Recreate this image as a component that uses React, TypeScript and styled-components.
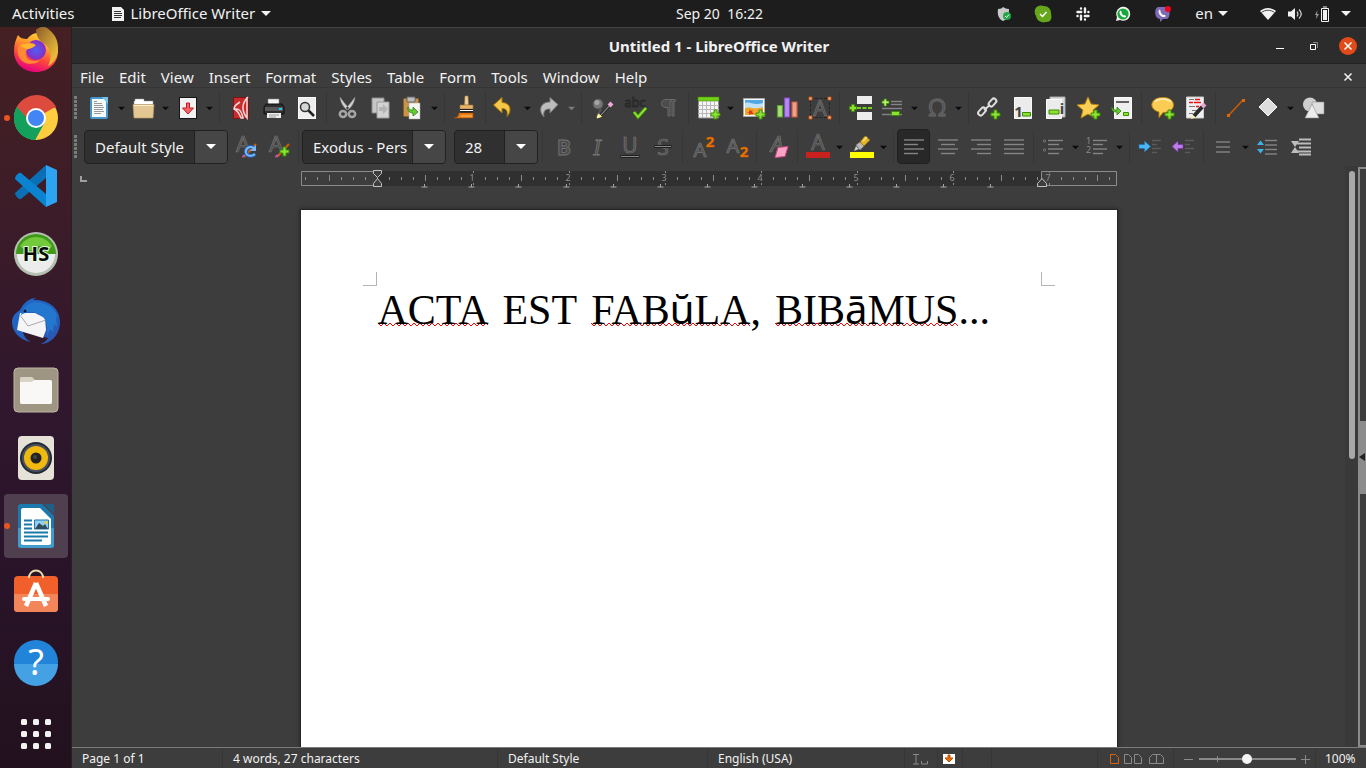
import React from "react";
import styled, { createGlobalStyle } from "styled-components";

const ui = `"Noto Sans", "Open Sans", sans-serif`;

const GlobalStyle = createGlobalStyle`
  * { box-sizing: border-box; }
  html, body, #root { height: 100%; margin: 0; }
  body { font-family: ${ui}; font-size: 15px; color: #f2f2f2; background: #3d3d3d; overflow: hidden; }
  button, input { font: inherit; color: inherit; border: 0; padding: 0; margin: 0; background: none; outline: none; }
  svg { display: block; flex: none; overflow: visible; }
`;

/* ---------- desktop ---------- */

const Desktop = styled.div`
  height: 100vh;
  display: flex;
  flex-direction: column;
`;

const TopBar = styled.header`
  height: 27px;
  flex: none;
  display: grid;
  grid-template-columns: 1fr auto 1fr;
  align-items: center;
  background: #1d1d1d;
`;

const TopGroup = styled.div<{ $end?: boolean }>`
  display: flex;
  align-items: center;
  justify-content: ${(p) => (p.$end ? "flex-end" : "flex-start")};
  padding: 0 15px 0 12px;
`;

const TopButton = styled.button<{ $gap?: number; $before?: number }>`
  display: flex;
  align-items: center;
  gap: ${(p) => p.$gap ?? 0}px;
  margin-left: ${(p) => p.$before ?? 0}px;
  line-height: 27px;
  white-space: pre;
`;

const Clock = styled.button`
  padding-left: 73px;
  font-size: 14px;
  line-height: 27px;
  white-space: pre;
`;

const Workspace = styled.div`
  flex: 1;
  min-height: 0;
  display: flex;
`;

const Dock = styled.nav`
  width: 72px;
  flex: none;
  display: flex;
  flex-direction: column;
  background: linear-gradient(#452023, #3c1c28 25%, #30172d 50%, #2a142b 70%, #22111d);
  border-right: 1px solid #262023;
`;

const DockList = styled.div`
  flex: 1;
  min-height: 0;
  display: flex;
  flex-direction: column;
  align-items: center;
  justify-content: flex-end;
  gap: 4px;
  overflow: hidden;
`;

const DockItem = styled.button<{ $active?: boolean }>`
  width: 64px;
  height: 64px;
  flex: none;
  display: grid;
  place-items: center;
  border-radius: 4px;
  background: ${(p) => (p.$active ? "#50404f" : "transparent")};
  position: relative;
`;

const RunningDot = styled.i`
  position: absolute;
  left: 0;
  top: 29px;
  width: 6px;
  height: 6px;
  border-radius: 50%;
  background: #e95420;
`;

const AppsButton = styled.button`
  height: 74px;
  flex: none;
  display: grid;
  place-items: center;
  padding-top: 6px;
`;

/* ---------- window ---------- */

const Window = styled.main`
  flex: 1;
  min-width: 0;
  display: flex;
  flex-direction: column;
  background: #3d3d3d;
`;

const TitleBar = styled.div`
  height: 37px;
  flex: none;
  display: grid;
  grid-template-columns: 1fr auto 1fr;
  align-items: center;
  background: #2c2c2c;
  border-top: 1px solid #434343;
  border-bottom: 1px solid #222;
`;

const Title = styled.h1`
  grid-column: 2;
  margin: 0;
  font-size: 15px;
  line-height: 20px;
  font-weight: 700;
`;

const WindowButtons = styled.div`
  display: flex;
  justify-content: flex-end;
  align-items: center;
  gap: 16px;
  padding-right: 9px;
`;

const WindowButton = styled.button`
  width: 18px;
  height: 18px;
`;

const MenuBar = styled.nav`
  height: 24px;
  flex: none;
  display: flex;
  align-items: center;
  justify-content: space-between;
  padding: 2px 9px 0 8px;
  border-bottom: 1px solid #353535;
`;

const Menus = styled.div`
  display: flex;
  gap: 15px;
`;

const MenuButton = styled.button`
  line-height: 22px;
`;

const ToolBar = styled.div`
  height: 39px;
  flex: none;
  display: flex;
  align-items: center;
  padding-left: 1px;
`;

const Grip = styled.i<{ $wide?: boolean }>`
  width: 3px;
  height: 23px;
  margin: 0 ${(p) => (p.$wide ? 7 : 6)}px 0 1px;
  background: repeating-linear-gradient(#7b7b7b 0 3px, transparent 3px 4px);
`;

const Tool = styled.button<{ $split?: boolean; $active?: boolean }>`
  width: 33px;
  height: 35px;
  flex: none;
  display: grid;
  place-items: center;
  padding-left: ${(p) => (p.$split || p.$active ? 0 : 3)}px;
  border-radius: 4px;
  border: 1px solid ${(p) => (p.$active ? "#202020" : "transparent")};
  background: ${(p) => (p.$active ? "#282828" : "transparent")};
`;

const ToolArrow = styled.button<{ $dim?: boolean }>`
  width: 11px;
  height: 35px;
  flex: none;
  display: grid;
  place-items: center;
  padding-top: 2px;
  color: ${(p) => (p.$dim ? "#7c7c7c" : "#0c0c0c")};
`;

const Separator = styled.i`
  width: 8px;
  height: 33px;
  flex: none;
  background: linear-gradient(90deg, transparent 4px, #363636 4px 5px, transparent 5px);
`;

const Combo = styled.div<{ $width: number; $after?: boolean }>`
  width: ${(p) => p.$width}px;
  height: 34px;
  flex: none;
  display: flex;
  border: 1px solid #202020;
  border-radius: 4px;
  background: #303030;
  overflow: hidden;
  margin-left: ${(p) => (p.$after ? 8 : 0)}px;
`;

const ComboInput = styled.input`
  flex: 1;
  min-width: 0;
  padding-left: 10px;
`;

const ComboArrow = styled.button`
  width: 33px;
  display: grid;
  place-items: center;
  background: #464646;
  border-left: 1px solid #202020;
`;

/* ---------- document ---------- */

const Body = styled.div`
  flex: 1;
  min-height: 0;
  display: flex;
`;

const Editor = styled.section`
  flex: 1;
  min-width: 0;
  display: flex;
  flex-direction: column;
  overflow: hidden;
`;

const RulerRow = styled.div`
  height: 23px;
  flex: none;
  display: grid;
  grid-template-columns: 1fr 818px 1fr;
  align-items: end;
`;

const TabCorner = styled.button`
  width: 7px;
  height: 6px;
  margin: 0 0 7px 8px;
  border-left: 2px solid #a0a0a0;
  border-bottom: 2px solid #a0a0a0;
`;

const Canvas = styled.div`
  flex: 1;
  min-height: 0;
  overflow: hidden;
  padding-top: 20px;
  display: flex;
  justify-content: center;
  align-items: flex-start;
`;

const Page = styled.article`
  width: 818px;
  height: 1056px;
  flex: none;
  background: #fff;
  color: #000;
  border: 1px solid #262626;
  box-shadow: 0 0 4px #222;
`;

const MarginMarks = styled.div`
  display: flex;
  justify-content: space-between;
  padding: 62px 62px 0;
`;

const Mark = styled.i<{ $right?: boolean }>`
  width: 14px;
  height: 14px;
  border-bottom: 1px solid #b4b4b4;
  border-left: ${(p) => (p.$right ? "1px solid #b4b4b4" : 0)};
  border-right: ${(p) => (p.$right ? 0 : "1px solid #b4b4b4")};
`;

const Line = styled.p`
  margin: 0;
  padding: 0 77px;
  display: flex;
  gap: 14px;
  font-family: "Liberation Serif", serif;
  font-size: 42px;
  line-height: 48px;
  white-space: nowrap;
`;

const Word = styled.span`
  display: flex;
`;

const Misspelt = styled.span`
  height: 48px;
  background: url("data:image/svg+xml,%3Csvg xmlns='http://www.w3.org/2000/svg' width='6' height='5'%3E%3Cpath d='M-1 0L0 1L3 4L6 1L7 0' fill='none' stroke='%23f00'/%3E%3C/svg%3E") 0 36px / 6px 5px repeat-x;
`;

const Fallback = styled.span`
  font-family: "Noto Sans", sans-serif;
  font-size: 40px;
  line-height: 40px;
`;

const ScrollTrack = styled.div`
  width: 13px;
  flex: none;
  display: flex;
  justify-content: center;
  background: #393939;
  padding-top: 5px;
`;

const ScrollThumb = styled.div`
  width: 6px;
  height: 50%;
  border-radius: 3px;
  background: #a8a8a8;
`;

const Sidebar = styled.aside`
  width: 8px;
  flex: none;
  display: flex;
  flex-direction: column;
  border: solid #8a8a8a;
  border-width: 2px 0 2px 2px;
  justify-content: center;
  margin-top: 1px;
`;

const SidebarHandle = styled.button`
  height: 73px;
  margin-left: -2px;
  background: #8c8c8c;
  display: grid;
  place-items: center;
`;

/* ---------- status bar ---------- */

const StatusBar = styled.footer`
  height: 21px;
  flex: none;
  display: flex;
  align-items: stretch;
  border-top: 1px solid #7a7a7a;
  font-size: 12px;
  line-height: 18px;
`;

const Cell = styled.div<{ $width?: number; $pad?: number; $last?: boolean }>`
  ${(p) => (p.$width ? `width: ${p.$width}px; flex: none;` : "flex: 1; min-width: 0;")}
  display: flex;
  align-items: center;
  padding: 2px 0 0 ${(p) => p.$pad ?? 10}px;
  white-space: nowrap;
  border-right: ${(p) => (p.$last ? 0 : "1px solid #363636")};
`;

const StatusIcon = styled.button`
  display: flex;
`;

const ZoomRange = styled.input`
  appearance: none;
  width: 97px;
  height: 14px;
  margin: 0 5px;
  background:
    linear-gradient(#8a8a8a, #8a8a8a) 18px 50% / 1px 6px no-repeat,
    linear-gradient(#8a8a8a, #8a8a8a) 0 50% / 100% 2px no-repeat;
  &::-webkit-slider-thumb {
    appearance: none;
    width: 10px;
    height: 10px;
    border-radius: 50%;
    background: #f4f4f4;
  }
`;

/* ---------- icons ---------- */

const Triangle = ({ w = 9, color = "currentColor" }: { w?: number; color?: string }) => (
  <svg width={w} height={5} viewBox="0 0 10 5"><path d="M0 0h10L5 5z" fill={color} /></svg>
);

const Plus = ({ x, y }: { x: number; y: number }) => (
  <path transform={`translate(${x} ${y})`} d="M3.5.5h3v3h3v3h-3v3h-3v-3h-3v-3h3z" fill="#8ae234" stroke="#3f8a04" />
);

const Letter = ({ x = 12, y = 21, size = 23, children, italic }: { x?: number; y?: number; size?: number; children: string; italic?: boolean }) => (
  <text x={x} y={y} fontFamily='"Noto Sans"' fontSize={size} textAnchor="middle" fontStyle={italic ? "italic" : "normal"} fill="#4a4a4a" stroke="#777" strokeWidth=".7">{children}</text>
);

const Rows = ({ rows, color = "#858585", w = 1.4 }: { rows: number[][]; color?: string; w?: number }) => (
  <g stroke={color} strokeWidth={w}>{rows.map(([x1, x2, y], i) => <path key={i} d={`M${x1} ${y}H${x2}`} />)}</g>
);

const icons: Record<string, React.ReactNode> = {
  newDoc: <><rect x="3" y="2" width="16" height="20" rx="1" fill="#f4f9fc" stroke="#4597cc" strokeWidth="2" /><path d="M14 1h6v7z" fill="#75c4ee" /><path d="M6 5.500h3M6 7.500h8M6 9.500h9M6 11.500h10M6 13.500h9M6 15.500h10M6 17.500h7" stroke="#9a9a9a" /></>,
  open: <><path d="M2 9V5h1V3h9v2h9v4z" fill="#fff" stroke="#999" strokeWidth=".5" /><path d="M1 8.500h21l-1 13.500H2z" fill="#e5c793" stroke="#b99b66" strokeWidth=".7" /><path d="M2 9.500h19" stroke="#fbebcd" /></>,
  save: <><rect x="3.500" y="1.500" width="17" height="21" fill="#f2f2f2" stroke="#161616" /><path d="M10.500 7h3v5h4L12 18l-5.500-6h4z" fill="#f06565" stroke="#c51a20" /></>,
  pdf: <><path d="M4.500 1.500h15v21h-15z" fill="#c92b2b" stroke="#7e1313" /><path d="M11 6C6 9 5 12 5 13c3 1 5 4 7 9h2C12 12 8 13 5 13M19 1c-6 6-7 13-1 21V1" fill="none" stroke="#f7d9d9" strokeWidth="1.500" /></>,
  print: <><path d="M6 3h11v7H6z" fill="#f5f5f5" stroke="#888" strokeWidth=".6" /><path d="M4 8h16l2 3v7H2v-7z" fill="#2d2d2d" stroke="#111" /><path d="M3 11h18v4H3z" fill="#585858" /><path d="M5 17h14v5H5z" fill="#eee" /><path d="M7 19h10M7 21h7" stroke="#999" /><path d="M17 12h3v2h-3z" fill="#19c8f5" /></>,
  preview: <><rect x="3.500" y="1.500" width="17" height="21" fill="#eee" stroke="#fafafa" /><circle cx="10" cy="11" r="4.500" fill="#d4d7d7" stroke="#333" strokeWidth="1.500" /><path d="m13.500 14.500 5.500 5.500" stroke="#222" strokeWidth="2.500" /></>,
  cut: <><path d="M4 1c0 5 4 11 7 13l2-2C10 9 7 5 4 1zM19 1c0 5-4 11-7 13l-2-2c3-3 6-7 9-11z" fill="#cfcfcf" stroke="#777" strokeWidth=".5" /><g fill="none" stroke="#a5a5a5" strokeWidth="2.500"><ellipse cx="7" cy="18" rx="3.200" ry="3" /><ellipse cx="16" cy="18" rx="3.200" ry="3" /></g></>,
  copy: <><path d="M3 2h12v15H3z" fill="#c6c6c6" stroke="#8c8c8c" /><path d="M8 6h12v16H8z" fill="#d2d2d2" stroke="#999" /><path d="M10 11h4V8l5 5-5 5v-3h-4z" fill="#b3b3b3" /></>,
  paste: <><rect x="2.500" y="2.500" width="15" height="18" rx="1" fill="#c99448" stroke="#8d5f22" /><path d="M6 1h8v5H6z" fill="#bcbcbc" stroke="#666" /><path d="M8 7h11v16H8z" fill="#f5f5f5" stroke="#aaa" strokeWidth=".5" /><path d="M7 11c1 3 3 3 5 3v-3l5 5-5 4v-3c-4 0-6-3-5-6z" fill="#62cc30" stroke="#327f10" strokeWidth=".8" /></>,
  clone: <><path d="M11 0h3l.5 9h-4z" fill="#f0d29b" stroke="#a77d3f" strokeWidth=".6" /><path d="M6 9h13v4H6z" fill="#e5b46c" stroke="#9c7033" strokeWidth=".6" /><path d="M6 13h13v4H6z" fill="#222" /><path d="M6 14.500h13" stroke="#fff" /><path d="M5 17h14v5H0c3 0 5-2 5-5z" fill="#e77d14" stroke="#b4560a" strokeWidth=".5" /><path d="M7 20h11" stroke="#ffc06b" /></>,
  undo: <path d="M-.5 9 8 1.500v5c9 0 10 9 5 14 1-6-1-8-5-8V17z" fill="#f5c647" stroke="#a87a07" />,
  redo: <path d="M20 8.500 12 1.500v4.500C2 6 0 15 6 21c-1-6 1-8 6-8v4z" fill="#bdbdbd" stroke="#777" />,
  find: <><circle cx="7" cy="8" r="5" fill="#777" stroke="#555" /><circle cx="6" cy="6.500" r="2.500" fill="#a5a5a5" /><path d="m10 13-4 8" stroke="#555" strokeWidth="2" /><path d="m9 20 11-12" stroke="#333" strokeWidth="3.500" /><path d="m9 20 11-12" stroke="#a5a5a5" strokeWidth="1" /><path d="m18 7 3 3" stroke="#f0a6d8" strokeWidth="4" /><path d="m6 22 1.500-4 3 2.500z" fill="#fff59a" stroke="#fff59a" /></>,
  spell: <><text x="11" y="11" fontFamily='"Noto Sans"' fontSize="13" textAnchor="middle" fill="#484848" stroke="#252525" strokeWidth=".8">abc</text><path d="m10 16 4 5 8-9" fill="none" stroke="#3f8a04" strokeWidth="3.500" /><path d="m10 16 4 5 8-9" fill="none" stroke="#8ae234" strokeWidth="2" /></>,
  pilcrow: <path d="M18 3.500H9c-6 0-6 8 0 8h2V20h2V5h2v15h2V5h2z" fill="#4c4c4c" stroke="#6b6b6b" />,
  table: <><path d="M1.500 1.500h20V22h-20z" fill="#f5f5f5" stroke="#8b8b8b" /><path d="M1 1h21v4H1z" fill="#73d216" stroke="#3f8a04" strokeWidth=".6" /><path d="M1 9.500h21M1 13.500h21M1 17.500h21M5.500 5v17M9.500 5v17M13.500 5v17M17.500 5v17" stroke="#b7b7b7" /><Plus x={13.500} y={13.500} /></>,
  image: <><path d="M1.500 2.500h21v18h-21z" fill="#f9f9f9" stroke="#aaa" /><path d="M3 4h18v8H3z" fill="#54a7e5" /><path d="M3 7c5-2 8 3 18 0v6H3z" fill="#bfe2f8" /><path d="M3 12c5-2 10 2 18-1v8H3z" fill="#f3a52b" /><path d="m8 13 1 2 2-1-1 2 2 2H9l-2 1v-2l-2-1h2z" fill="#d73d17" /><Plus x={13.500} y={13.500} /></>,
  chart: <g strokeWidth="1.200"><path d="M2.500 9.500h5V21h-5z" fill="#a5dd7c" stroke="#55a425" /><path d="M9.500 2h5v19h-5z" fill="#b58bea" stroke="#8348ce" /><path d="M17 6h5v15h-5z" fill="#eba08b" stroke="#c85f42" /></g>,
  textBox: <><path d="M2.500 2.500h19v19h-19z" fill="none" stroke="#242424" strokeDasharray="3 1.500" /><Letter y={20} size={21}>A</Letter><g fill="#f9bb8c" stroke="#c45214"><path d="M1 1h3v3H1zM20 1h3v3h-3zM1 20h3v3H1zM20 20h3v3h-3z" /></g></>,
  pageBreak: <><path d="M8 0h15v8H8zM8 16h15v8H8z" fill="#ededed" /><path d="M8 12h15" stroke="#73d216" strokeWidth="2" strokeDasharray="4 1.500" /><path d="M2.500 8.500h3v2h2v3h-2v2h-3v-2h-2v-3h2z" fill="#8ae234" stroke="#3f8a04" strokeWidth=".8" /></>,
  field: <><Rows rows={[[10, 21, 5.500], [10, 21, 8.500], [1, 21, 12.500], [1, 11, 18.500], [18, 21, 18.500]]} /><path d="M10.500 15.500h8v4h-8z" fill="#8ae234" stroke="#3f8a04" /><path d="M3 3h2.500v2H8v2.500H5.500V10H3V7.500H1V5h2z" fill="#b4f26d" stroke="#3f8a04" strokeWidth=".8" /></>,
  omega: <text x="12" y="20" fontFamily='"Noto Sans"' fontSize="24" textAnchor="middle" fill="#505050" stroke="#6c6c6c" strokeWidth=".8">Ω</text>,
  link: <><g fill="none" stroke="#dedede" strokeWidth="2"><rect x="12" y="2" width="5" height="9" rx="2.500" transform="rotate(42 14.500 6.500)" /><rect x="1.500" y="11" width="5" height="9" rx="2.500" transform="rotate(42 4 15.500)" /><path d="m6 14 6-5" /></g><Plus x={12.500} y={13.500} /></>,
  footnote: <><path d="M3.500 1.500h17v21h-17z" fill="#ececec" stroke="#fafafa" /><text x="7.500" y="21" fontFamily='"Noto Sans"' fontWeight="700" fontSize="15" textAnchor="middle" fill="#444">1</text><path d="M11.500 16.500h8v3.500h-8z" fill="#8ae234" stroke="#3f8a04" /></>,
  endnote: <><path d="M6 1h15v20H6z" fill="#dcdcdc" stroke="#aaa" /><path d="M2.500 3.500h15v19h-15z" fill="#ececec" stroke="#fafafa" /><path d="M5 14h10v4H5z" fill="#8ae234" stroke="#3f8a04" /><text x="18" y="18" fontFamily='"Noto Sans"' fontWeight="700" fontSize="15" textAnchor="middle" fill="#444">i</text></>,
  bookmark: <><path d="m11 1 3 7 8 1-6 5 2 8-7-4-7 4 2-8-6-5 8-1z" fill="#fbcf55" stroke="#bd8709" /><Plus x={13.500} y={13.500} /></>,
  crossRef: <><path d="M4.500 1.500h17v21h-17z" fill="#efefef" stroke="#fafafa" /><path d="M6 6h13" stroke="#333" strokeWidth="1.500" /><path d="M13.500 16.500h5v3h-5z" fill="#8ae234" stroke="#3f8a04" /><path d="M2 11c1 3 3 3 5 3v-3l4 4-4 4v-3c-4 0-6-2-5-5z" fill="#62cc30" stroke="#327f10" strokeWidth=".8" /></>,
  comment: <><path d="M12 1.500c14 0 14 15 0 15l-4 5v-5.500C-3 13-1 1.500 12 1.500z" fill="#fbcb54" stroke="#bd8709" /><path d="M4 6c3-4 12-4 16 0" stroke="#ffe9a8" fill="none" strokeWidth="2" /><Plus x={13.500} y={13.500} /></>,
  track: <><path d="M2.500 1h17v21h-17z" fill="#f0f0f0" stroke="#ccc" /><path d="M5 3.500h5M5 10.500h6M8 14.500h5M5 17.500h4" stroke="#777" /><path d="M11 3.500h5M5 6.500h4M10 6.500h7M12 10.500h3" stroke="#e11" strokeWidth="1.500" /><path d="m10 20 9-10" stroke="#2b2b2b" strokeWidth="4" /><path d="m18 8 3 3" stroke="#e8a5d4" strokeWidth="4" /><path d="m7 23 1.500-4 3 2.500z" fill="#fff1a0" /></>,
  line: <><path d="M4 19 18 4" stroke="#ce5c00" strokeWidth="1.500" /><path d="M2 18h3v3H2zM17 3h3v3h-3z" fill="#e06808" /></>,
  diamond: <path d="m11 2 9 9-9 9-9-9z" fill="#ddd" stroke="#f5f5f5" />,
  shapes: <><circle cx="8" cy="8.500" r="7" fill="#cfcfcf" /><path d="M10 6h12v12H10z" fill="#dfdfdf" stroke="#8b8b8b" strokeWidth=".6" /><path d="m10 8 7 14H3z" fill="#ececec" stroke="#8b8b8b" strokeWidth=".6" /></>,

  updateStyle: <><Letter x={9} y={17} size={22}>A</Letter><path d="m10 22 12-13" stroke="#ce5c00" strokeWidth="2" /><path d="M8 23c0-4 3-4 4-3z" fill="#c45ad0" /><path d="M20 13c-5-3-9 1-8 5 1 3 6 4 9 1" fill="none" stroke="#1e5fb0" strokeWidth="4" /><path d="M20 13c-5-3-9 1-8 5 1 3 6 4 9 1" fill="none" stroke="#7db8f5" strokeWidth="2" /><path d="M22 10v6h-6z" fill="#7db8f5" /></>,
  newStyle: <><Letter x={9} y={17} size={22}>A</Letter><path d="m10 22 12-13" stroke="#ce5c00" strokeWidth="2" /><path d="M8 23c0-4 3-4 4-3z" fill="#c45ad0" /><Plus x={12.500} y={11.500} /></>,
  bold: <text x="12" y="19.500" fontFamily='"Noto Sans"' fontWeight="700" fontSize="21" textAnchor="middle" fill="#4a4a4a" stroke="#777" strokeWidth=".8">B</text>,
  italic: <text x="12" y="19.500" fontFamily='"Liberation Serif"' fontStyle="italic" fontSize="23" textAnchor="middle" fill="#4a4a4a" stroke="#777" strokeWidth=".8">I</text>,
  underline: <><Letter y={18} size={21}>U</Letter><path d="M2.500 21.500h19" stroke="#1f1f1f" strokeWidth="3" /><path d="M3 21.500h18" stroke="#8a8a8a" /></>,
  strike: <><Letter y={19.500} size={21}>S</Letter><path d="M3.500 11.500h17" stroke="#1f1f1f" strokeWidth="3" /><path d="M4 11.500h16" stroke="#8a8a8a" /></>,
  superscript: <><Letter x={8} y={22} size={20}>A</Letter><text x="18" y="12" fontFamily='"Noto Sans"' fontWeight="700" fontSize="15" textAnchor="middle" fill="#f57900" stroke="#c45a00" strokeWidth=".6">2</text></>,
  subscript: <><Letter x={8} y={18} size={20}>A</Letter><text x="19" y="22" fontFamily='"Noto Sans"' fontWeight="700" fontSize="15" textAnchor="middle" fill="#f57900" stroke="#c45a00" strokeWidth=".6">2</text></>,
  clear: <><Letter x={11} y={17} size={22} italic>A</Letter><path d="m12 12.500 10-1-3 10-10 1z" fill="#f8a2c6" stroke="#cf4884" /></>,
  fontColor: <><Letter y={15} size={21}>A</Letter><path d="M0 17h24v6H0z" fill="#c9211e" /></>,
  highlight: <><path d="M0 17h24v6H0z" fill="#ff0" /><path d="m4 16 2-5 3 3z" fill="#ccc" /><path d="m6 10 4-3 4 4-4 4z" fill="#b9b9b9" stroke="#777" strokeWidth=".5" /><path d="m10 7 5-6 5 4-6 6z" fill="#e3b32a" stroke="#96700c" strokeWidth=".7" /><path d="m13 6 4-4" stroke="#ffe68a" strokeWidth="1.500" /></>,
  left: <Rows rows={[[2, 22, 5], [2, 16, 9.500], [2, 22, 14], [2, 16, 18.500]]} />,
  center: <Rows rows={[[2, 22, 5], [5, 19, 9.500], [2, 22, 14], [5, 19, 18.500]]} />,
  right: <Rows rows={[[2, 22, 5], [8, 22, 9.500], [2, 22, 14], [8, 22, 18.500]]} />,
  justify: <Rows rows={[[2, 22, 5], [2, 22, 9.500], [2, 22, 14], [2, 22, 18.500]]} />,
  bullets: <><Rows rows={[[6, 21, 5.500], [6, 17, 9.500], [6, 21, 14], [6, 17, 18.500]]} /><g fill="none" stroke="#777"><circle cx="2.500" cy="6" r="1.200" /><circle cx="2.500" cy="15" r="1.200" /></g></>,
  numbers: <><Rows rows={[[7, 21, 5.500], [7, 17, 9.500], [7, 21, 14], [7, 17, 18.500]]} /><text x="0" y="9" fontSize="9" fontFamily='"Noto Sans"' fill="#888">1</text><text x="0" y="18" fontSize="9" fontFamily='"Noto Sans"' fill="#888">2</text></>,
  indent: <><Rows color="#5b5b5b" rows={[[13, 22, 5.500], [13, 18, 9.500], [13, 22, 13.500], [13, 18, 17.500]]} /><path d="M0 9.500h5.500V6l6 5.500-6 5.500v-3.500H0z" fill="#4ab7f4" stroke="#1a6fae" strokeWidth=".6" /></>,
  outdent: <><Rows color="#5b5b5b" rows={[[13, 22, 5.500], [13, 18, 9.500], [13, 22, 13.500], [13, 18, 17.500]]} /><path d="M11 9.500H6V6L0 11.500 6 17v-3.500h5z" fill="#c07bea" stroke="#7433a5" strokeWidth=".6" /></>,
  lineSpacing: <Rows rows={[[4, 18, 7], [4, 18, 12], [4, 18, 17]]} />,
  moreSpace: <><Rows rows={[[8, 20, 5.500], [8, 20, 10], [8, 20, 14.500], [8, 20, 19]]} /><path d="M0 10h7L3.500 5.500zM0 14h7l-3.500 4.500z" fill="#3eb4e6" /></>,
  lessSpace: <><path d="M9 4.500h12M7 8.500h14M9 12.500h12M7 16.500h14M9 19.500h12" stroke="#bcbcbc" strokeWidth="2" /><path d="M1 6h8l-4 6zM1 18h8l-4-6z" fill="#bdbdbd" /></>,
};

const Icon = ({ name }: { name: string }) => (
  <svg width="24" height="24" viewBox="0 0 24 24">{icons[name]}</svg>
);

/* "name" is a plain tool, "name+" opens a menu, "name-" has a disabled menu, "name*" is switched on, "|" separates groups */
const standardTools = "newDoc+ open+ save+ | pdf print preview | cut copy paste+ | clone | undo+ redo- | find spell pilcrow | table+ image chart textBox | pageBreak field+ omega+ | link footnote endnote bookmark crossRef | comment track | line diamond+ shapes".split(" ");
const styleTools = "updateStyle newStyle |".split(" ");
const formatTools = "| bold italic underline strike | superscript subscript | clear | fontColor+ highlight+ | left* center right justify | bullets+ numbers+ | indent outdent | lineSpacing+ moreSpace lessSpace".split(" ");

const Tools = ({ items }: { items: string[] }) => (
  <>
    {items.map((item, i) => {
      if (item === "|") return <Separator key={i} />;
      const name = item.replace(/[+*-]$/, "");
      const split = /[+-]$/.test(item);
      return (
        <React.Fragment key={i}>
          <Tool $split={split} $active={item.endsWith("*")} aria-label={name}><Icon name={name} /></Tool>
          {split && <ToolArrow $dim={item.endsWith("-")} aria-label={`${name} options`}><Triangle w={7} /></ToolArrow>}
        </React.Fragment>
      );
    })}
  </>
);

const ComboBox = ({ label, value, width, after }: { label: string; value: string; width: number; after?: boolean }) => (
  <Combo $width={width} $after={after}>
    <ComboInput aria-label={label} defaultValue={value} />
    <ComboArrow aria-label={`${label} list`}><Triangle w={10} color="#fff" /></ComboArrow>
  </Combo>
);

/* ---------- ruler ---------- */

const Ruler = () => {
  const ticks: React.ReactNode[] = [];
  for (let k = -6; k <= 61; k++) {
    const x = 77.5 + k * 12;
    if (k === 0 || x > 812) continue;
    const mod = ((k % 8) + 8) % 8;
    if (mod === 0) ticks.push(<path key={k} d={`M${x} 2v2M${x} 14v2`} />);
    else if (mod === 4) ticks.push(<path key={k} d={`M${x} 6v6`} />);
    else ticks.push(<path key={k} d={`M${x} 8v3`} />);
  }
  return (
    <svg width="818" height="20" viewBox="0 0 818 20">
      <path d="M77 2h665v15H77z" fill="#303030" />
      <g fill="#3d3d3d" stroke="#8b8b8b">
        <path d="M1.500 2.500h76v14h-76zM741.500 2.500h75v14h-75z" />
      </g>
      <g stroke="#8b8b8b">{ticks}</g>
      <g fill="#8e8e8e" fontFamily='"Noto Sans"' fontSize="9" textAnchor="middle">
        {[1, 2, 3, 4, 5, 6, 7].map((n) => <text key={n} x={76 + n * 96} y="12">{n}</text>)}
      </g>
      <g stroke="#a5a5a5">
        {Array.from({ length: 13 }, (_, i) => <path key={i} d={`M${124.500 + Math.round(i * 47.2)} 15v3m-3 0h6`} />)}
      </g>
      <g fill="#3d3d3d" stroke="#c4c4c4">
        <path d="M73.500 1.500h8v3l-4 4-4-4z" /><path d="M73.500 17.500h8v-3l-4-5-4 5z" /><path d="M737.500 17.500h9v-3l-4.500-5-4.500 5z" />
      </g>
    </svg>
  );
};

/* ---------- launcher icons ---------- */

const dockIcons: { name: string; running?: boolean; active?: boolean; art: React.ReactNode }[] = [
  { name: "Firefox", art: <>
    <defs>
      <linearGradient id="fx" x1=".8" y1="0" x2=".4" y2="1"><stop offset="0" stopColor="#ffe03a" /><stop offset=".35" stopColor="#ffa22b" /><stop offset=".65" stopColor="#ff4c3c" /><stop offset="1" stopColor="#e6007e" /></linearGradient>
      <radialGradient id="fxBlue"><stop offset="0" stopColor="#4d60f0" /><stop offset="1" stopColor="#8b2bc5" /></radialGradient>
      <linearGradient id="fxTail" x1="0" x2="1" y2="1"><stop offset="0" stopColor="#8b5c2a" /><stop offset="1" stopColor="#ffd23e" /></linearGradient>
    </defs>
    <path d="M6 9c2 3 5 4 9 4 4-5 9-7 13-6 9 2 18 7 18 18 0 12-9 21-22 21S2 37 2 25c0-7 2-12 4-16z" fill="url(#fx)" />
    <path d="M24 4c3-3 7-4 11-2 7 5 11 11 11 20 0 8-4 15-10 18 4-8 3-16-2-21-6-4-10-8-10-15z" fill="url(#fxTail)" />
    <circle cx="24" cy="24" r="10" fill="url(#fxBlue)" />
    <path d="M7 19c4-4 10-3 16-1-3 5-7 4-9 7-2 8 6 12 14 9-5 6-17 5-21-3-2-4-2-8 0-12z" fill="#ff8a32" /><path d="M8 20c4-3 10-3 16-1-3 3-7 4-9 4z" fill="#ffb62d" />
  </> },
  { name: "Chrome", running: true, art: <>
    <circle cx="24" cy="24" r="22" fill="#ffcd40" />
    <path d="M24 24 4.900 13A22 22 0 0 1 43.100 13z" fill="#dd4b3e" /><path d="M24 14h20.500A22 22 0 0 0 4.900 13l10 16z" fill="#dd4b3e" />
    <path d="M4.900 13A22 22 0 0 0 23 46l9.500-17L24 34z" fill="#12a05c" /><path d="M15 29 4.900 13A22 22 0 0 0 23 46l9-17z" fill="#12a05c" />
    <circle cx="24" cy="24" r="10" fill="#fff" /><circle cx="24" cy="24" r="8" fill="#4285f4" />
  </> },
  { name: "Visual Studio Code", art: <>
    <path d="M3 31 34 3v13L9 37c-2 1-6-3-6-6z" fill="#0b6fb5" /><path d="M3 17c0-3 4-7 6-6l25 21v13z" fill="#0a84d0" /><path d="m34 3 11 5v32l-11 5z" fill="#2ca4f2" />
  </> },
  { name: "HS", art: <>
    <circle cx="24" cy="24" r="22" fill="#b5bfb2" /><circle cx="24" cy="24" r="19" fill="#ececec" /><path d="M4 24a20 20 0 0 1 40 0z" fill="#3f9a18" /><path d="M8 16C16 4 32 4 40 16c-5 8-9-4-15 1S14 22 8 16z" fill="#73c93b" />
    <text x="24" y="31" fontFamily='"Noto Sans"' fontWeight="700" fontSize="20" textAnchor="middle" stroke="#e5ffe0" strokeWidth="2" paintOrder="stroke" fill="#080808">HS</text>
  </> },
  { name: "Thunderbird", art: <>
    <defs><linearGradient id="tb" x2="1" y2="1"><stop offset="0" stopColor="#1d69cc" /><stop offset="1" stopColor="#2b55ae" /></linearGradient></defs>
    <path d="M8 12C12 4 18 0 24 0l-3 2c15-1 27 8 27 22 0 12-9 22-19 22 4-2 6-4 7-6l-25-6c1 5 4 8 8 10C7 42 0 33 0 24c0-5 3-9 8-12z" fill="url(#tb)" />
    <path d="M8 15 5 32l26 8 3-8-1-12-10-5z" fill="#f5f5f7" /><path d="m8 17 8 11 18-6" fill="none" stroke="#aaa" />
    <path d="M24 4c14 1 20 8 22 16l-2-2 1 11-3-3-1 8-3-3-3 7c1-14-2-22-14-24-5-1-8 1-12 3 1-6 6-12 15-13z" fill="#2377ce" /><circle cx="13" cy="13" r="1.500" fill="#0c1838" />
  </> },
  { name: "Files", art: <>
    <rect x="2" y="2" width="44" height="44" rx="4" fill="#9e9682" stroke="#bdb6a3" /><path d="M8 13c0-2 1-2 2-2h10l3 3h15c1 0 2 0 2 2v6H8z" fill="#d9d3c6" /><path d="M8 16h11l4-2h15c1 0 2 1 2 2v20c0 2-1 2-2 2H10c-1 0-2 0-2-2z" fill="#f9f8f6" />
  </> },
  { name: "Rhythmbox", art: <>
    <rect x="6" y="2" width="36" height="44" rx="4" fill="#e6e2d8" /><circle cx="24" cy="24" r="16" fill="#242a33" /><circle cx="24" cy="24" r="14" fill="#4a5160" /><circle cx="24" cy="24" r="12" fill="#efb90f" /><circle cx="24" cy="24" r="5.500" fill="#222" /><circle cx="23" cy="23" r="2" fill="#444" />
  </> },
  { name: "LibreOffice Writer", running: true, active: true, art: <>
    <path d="M9 2h21l12 12v29c0 2-1 3-3 3H9c-2 0-3-1-3-3V5c0-2 1-3 3-3z" fill="#1c79ad" /><path d="M6 26v17c0 2 1 3 3 3h30c2 0 3-1 3-3V26z" fill="#3f9ccc" /><path d="M11 6h17l11 11v24c0 1-1 2-2 2H11c-1 0-2-1-2-2V8c0-1 1-2 2-2z" fill="#fff" /><path d="M32 2h8c1 0 2 1 2 2v8z" fill="#1c5f87" />
    <path d="M12 18.500h8M12 22.500h8M12 26.500h8M12 30.500h24M12 34.500h24M12 38.500h18" stroke="#1b78ab" strokeWidth="2" /><path d="M22.500 18h14v9h-14z" fill="#8fd0f2" stroke="#1b78ab" /><path d="m23 27 4-6 4 3 2-2 3 5z" fill="#334a5c" /><circle cx="34" cy="20.500" r="1.500" fill="#f5cc34" />
  </> },
  { name: "Ubuntu Software", art: <>
    <path d="M17 8C17-2 31-2 31 8" fill="none" stroke="#ead9a8" strokeWidth="2" /><rect x="2" y="6" width="44" height="36" rx="4" fill="#f1602a" /><path d="M2 24h44v14c0 3-1 4-4 4H6c-3 0-4-1-4-4z" fill="#f2855a" /><path d="M17 6v2M31 6v2" stroke="#ead9a8" strokeWidth="2" /><path d="M24 13 14 36M24 13l10 23" stroke="#fff" strokeWidth="4.500" /><path d="M12 29h24" stroke="#fff" strokeWidth="4" strokeLinecap="round" />
  </> },
  { name: "Help", art: <>
    <circle cx="24" cy="24" r="22" fill="#2184d8" /><path d="M2 26a22 22 0 0 0 44 0z" fill="#43a1e4" /><text x="24" y="37" fontFamily='"Noto Sans"' fontSize="36" textAnchor="middle" fill="#fff">?</text>
  </> },
];

const App = () => (
  <Desktop>
    <GlobalStyle />
    <TopBar>
      <TopGroup>
        <TopButton>Activities</TopButton>
        <TopButton $before={36} $gap={6}>
          <svg width="14" height="16" viewBox="0 0 14 16"><path d="M1 1h9l3 3v11H1z" fill="#f2f2f2" /><path d="M3 5.500h7M3 7.500h8M3 9.500h8M3 11.500h7" stroke="#333" /></svg>
          LibreOffice Writer
          <Triangle w={10} color="#f2f2f2" />
        </TopButton>
      </TopGroup>
      <Clock>Sep 20  16:22</Clock>
      <TopGroup $end>
        <TopButton aria-label="Shield"><svg width="16" height="16" viewBox="0 0 16 16"><path d="M2 3c3 0 4-1 5-2 2 1 3 2 6 2 0 6-1 10-6 12C3 13 1 9 2 3z" fill="#c9c9c9" /><circle cx="11" cy="10" r="4" fill="#22a847" /><path d="m9 10 1.500 1.500 2.500-3" fill="none" stroke="#fff" /></svg></TopButton>
        <TopButton $before={23} aria-label="Skype"><svg width="16" height="16" viewBox="0 0 16 16"><path d="M4 0c2-1 3 0 5 0 4 0 7 3 7 7 0 2 1 4 0 6-1 3-4 3-5 3-5 1-9-1-10-6-2-3-2-9 3-10z" fill="#66a61a" /><path d="m5 8 2.500 2.500 4-4.500" fill="none" stroke="#fff" strokeWidth="1.500" /></svg></TopButton>
        <TopButton $before={25} aria-label="Slack"><svg width="14" height="14" viewBox="0 0 14 14"><g stroke="#f2f2f2" strokeWidth="2.400" strokeLinecap="round"><path d="M5 1.500v.1M5 8.800v3.700M9 1.500v3.700M9 12.400v.1M1.500 5h3.700M12.400 5h.1M1.500 9h.1M8.800 9h3.700" /></g></svg></TopButton>
        <TopButton $before={26} aria-label="WhatsApp"><svg width="14" height="14" viewBox="0 0 14 14"><path d="M0 14 1 10A7 7 0 1 1 4 13z" fill="#f2f2f2" /><circle cx="7" cy="7" r="5.600" fill="#16a83c" /><path d="M4 4c1-1 2 1 1.500 2 .5 1 1.500 2 2.500 2.500 1-.5 2.500.5 2 1.500C7 12 2 7 4 4z" fill="#fff" /></svg></TopButton>
        <TopButton $before={25} aria-label="Viber"><svg width="16" height="16" viewBox="0 0 16 16"><path d="M3 1h9c3 1 4 10 0 12H8l-3 3v-3C-1 13-1 2 3 1z" fill="#7d6bb5" /><path d="M4 4c1-1 2 1 1.500 2 1 2 2 3 3 3 1-.5 2.500.5 2 1.500C7 13 2 7 4 4z" fill="#fff" /><circle cx="13" cy="3" r="3" fill="#f2001c" /></svg></TopButton>
        <TopButton $before={24} $gap={5}>en<Triangle w={10} color="#f2f2f2" /></TopButton>
        <TopButton $before={32} $gap={11} aria-label="System">
          <svg width="16" height="14" viewBox="0 0 16 14"><path d="M0 4c5-4 11-4 16 0L8 13z" fill="#f2f2f2" /><path d="M1.500 5.500c4-3 9-3 13 0" stroke="#1d1d1d" fill="none" strokeWidth=".8" /></svg>
          <svg width="16" height="14" viewBox="0 0 16 14"><path d="M1 4.500h3L8 1v12L4 9.500H1z" fill="#f2f2f2" /><path d="M10 4.500c1.500 2 1.500 3 0 5M12 2.500c3 3 3 6 0 9" fill="none" stroke="#d0d0d0" strokeWidth="1.200" /></svg>
          <svg width="16" height="16" viewBox="0 0 16 16"><path d="M7.500 2.500h7v13h-7zM9 1h4" fill="none" stroke="#f2f2f2" /><path d="M9 4h4v10H9z" fill="#f2f2f2" /><path d="M3.500 4 1 9h1.500L2 13l3-5H3z" fill="#999" /></svg>
          <Triangle w={10} color="#f2f2f2" />
        </TopButton>
      </TopGroup>
    </TopBar>

    <Workspace>
      <Dock>
        <DockList>
          {dockIcons.map((d) => (
            <DockItem key={d.name} $active={d.active} aria-label={d.name}>
              {d.running && <RunningDot />}
              <svg width="48" height="48" viewBox="0 0 48 48">{d.art}</svg>
            </DockItem>
          ))}
        </DockList>
        <AppsButton aria-label="Show applications">
          <svg width="30" height="30" viewBox="0 0 30 30">
            {[0, 12, 24].map((y) => [0, 12, 24].map((x) => <rect key={`${x}-${y}`} x={x} y={y} width="6" height="6" rx="1.500" fill="#f2f2f0" />))}
          </svg>
        </AppsButton>
      </Dock>

      <Window>
        <TitleBar>
          <Title>Untitled 1 - LibreOffice Writer</Title>
          <WindowButtons>
            <WindowButton aria-label="Minimize"><svg width="18" height="18"><path d="M5 11.500h8" stroke="#fff" /></svg></WindowButton>
            <WindowButton aria-label="Restore"><svg width="18" height="18"><path d="M5.500 7.500h5v5h-5z" fill="none" stroke="#fff" /><path d="M8 5.500h4.500V11" fill="none" stroke="#888" /></svg></WindowButton>
            <WindowButton aria-label="Close"><svg width="18" height="18"><circle cx="9" cy="9" r="9" fill="#e24a17" /><path d="m5.500 5.500 7 7m0-7-7 7" stroke="#fff" strokeWidth="1.500" /></svg></WindowButton>
          </WindowButtons>
        </TitleBar>

        <MenuBar>
          <Menus>
            {["File", "Edit", "View", "Insert", "Format", "Styles", "Table", "Form", "Tools", "Window", "Help"].map((m) => <MenuButton key={m}>{m}</MenuButton>)}
          </Menus>
          <WindowButton aria-label="Close document"><svg width="18" height="18"><path d="m5.500 5.500 7 7m0-7-7 7" stroke="#f2f2f2" strokeWidth="1.500" /></svg></WindowButton>
        </MenuBar>

        <ToolBar role="toolbar" aria-label="Standard">
          <Grip />
          <Tools items={standardTools} />
        </ToolBar>
        <ToolBar role="toolbar" aria-label="Formatting">
          <Grip $wide />
          <ComboBox label="Paragraph style" value="Default Style" width={144} />
          <Tools items={styleTools} />
          <ComboBox label="Font name" value="Exodus - Pers" width={144} />
          <ComboBox label="Font size" value="28" width={84} after />
          <Tools items={formatTools} />
        </ToolBar>

        <Body>
          <Editor>
            <RulerRow>
              <TabCorner aria-label="Tab type" />
              <Ruler />
            </RulerRow>
            <Canvas>
              <Page>
                <MarginMarks><Mark /><Mark $right /></MarginMarks>
                <Line>
                  <Word><Misspelt>ACTA</Misspelt></Word>
                  <Word>EST</Word>
                  <Word><Misspelt>FAB<Fallback>ŭ</Fallback>LA</Misspelt>,</Word>
                  <Word><Misspelt>BIB<Fallback>ā</Fallback>MUS</Misspelt>...</Word>
                </Line>
              </Page>
            </Canvas>
          </Editor>
          <ScrollTrack><ScrollThumb /></ScrollTrack>
          <Sidebar>
            <SidebarHandle aria-label="Show sidebar"><svg width="6" height="8"><path d="M6 0v8L0 4z" fill="#222" /></svg></SidebarHandle>
          </Sidebar>
        </Body>

        <StatusBar>
          <Cell $width={151}>Page 1 of 1</Cell>
          <Cell $width={275}>4 words, 27 characters</Cell>
          <Cell $width={210}>Default Style</Cell>
          <Cell>English (USA)</Cell>
          <Cell $width={33} $pad={7}><StatusIcon aria-label="Insert mode"><svg width="18" height="12"><path d="M1 1.500h6M4 2v9M1 11h6M9.500 8v3h6V8" fill="none" stroke="#8b8b8b" /></svg></StatusIcon></Cell>
          <Cell $width={25} $pad={5}><StatusIcon aria-label="Unsaved changes"><svg width="12" height="10"><path d="M0 0h12v10H0z" fill="#fff" /><path d="M5 1h2v3h3L6 8 2 4h3z" fill="#e0700c" stroke="#c05000" /></svg></StatusIcon></Cell>
          <Cell $width={29} />
          <Cell $width={106} />
          <Cell $width={76}>
            <StatusIcon aria-label="Page view">
              <svg width="58" height="12"><g fill="none" stroke="#8b8b8b"><path d="M2.500 1.500h5l3 3v6h-8z" stroke="#d9640a" /><path d="M16.500 1.500h4l3 3v6h-7zM26.500 1.500h4l3 3v6h-7zM48.500 10.500v-9h-4l-3 3v6zM48.500 1.500h4l3 3v6h-7z" /></g></svg>
            </StatusIcon>
          </Cell>
          <Cell $width={142}>
            <StatusIcon aria-label="Zoom out"><svg width="10" height="10"><path d="M0 5.500h9" stroke="#8b8b8b" /></svg></StatusIcon>
            <ZoomRange type="range" aria-label="Zoom" min={0} max={100} defaultValue={49} />
            <StatusIcon aria-label="Zoom in"><svg width="10" height="10"><path d="M0 5.500h9M4.500 1v9" stroke="#8b8b8b" /></svg></StatusIcon>
          </Cell>
          <Cell $width={50} $pad={9} $last>100%</Cell>
        </StatusBar>
      </Window>
    </Workspace>
  </Desktop>
);

export default App;
